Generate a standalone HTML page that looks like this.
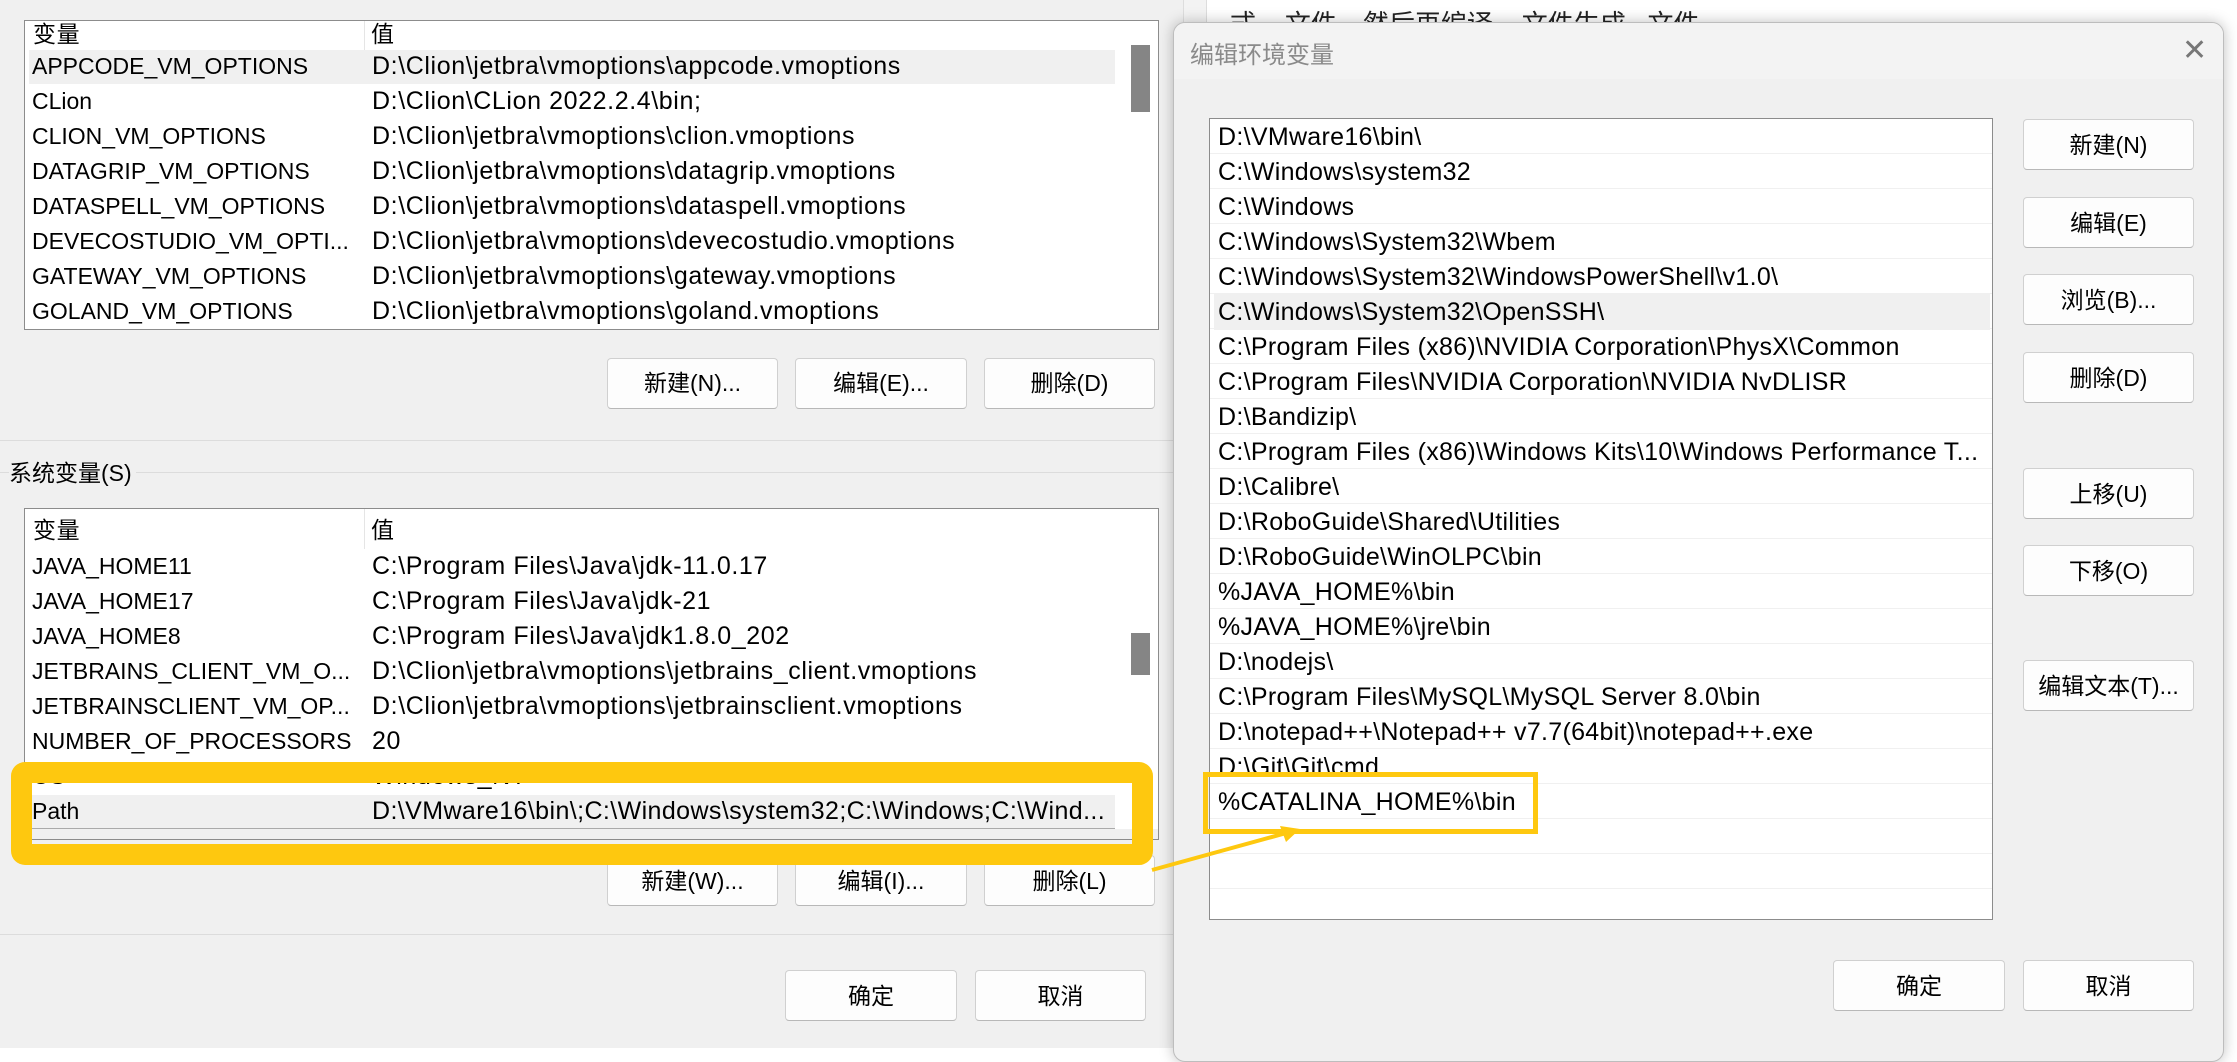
<!DOCTYPE html>
<html><head><meta charset="utf-8">
<style>
*{margin:0;padding:0;box-sizing:border-box}
body{width:2237px;height:1048px;position:relative;overflow:hidden;background:#fff;font-family:"Liberation Sans","Noto Sans CJK SC",sans-serif;font-size:23px;color:#000}
.a{position:absolute}
.box{position:absolute;background:#fff;border:1px solid #8c8c8c;overflow:hidden}
.row{position:absolute;left:0;height:35px;line-height:35px;white-space:nowrap;font-size:25px;letter-spacing:0.6px}
.nm .row{font-size:23px;letter-spacing:0}
.dl div{font-size:25px;letter-spacing:0.3px;white-space:nowrap}
.btn{position:absolute;background:#fdfdfd;border:1px solid #d0d0d0;border-bottom-color:#b8b8b8;border-radius:4px;text-align:center;font-size:23px}
</style></head><body>
<!-- left panel -->
<div class="a" style="left:0;top:0;width:1183px;height:1048px;background:#f0f0f0"></div>
<div class="a" style="left:1183px;top:0;width:24px;height:1048px;background:#f3f3f3;border-left:1px solid #ddd;border-right:1px solid #ddd"></div>
<div class="a" style="left:1230px;top:4px;font-size:26px;color:#222;white-space:nowrap">式. &nbsp;&nbsp;文件，然后再编译. &nbsp;&nbsp;文件生成. &nbsp;文件</div>

<!-- list 1 -->
<div class="box" style="left:24px;top:20px;width:1135px;height:310px">
  <div class="a" style="left:0;top:0;width:1100px;height:29px;background:#fff"></div>
  <div class="a" style="left:339px;top:0;width:1px;height:29px;background:#e5e5e5"></div>
  <div class="row" style="top:-4px;left:8px;font-size:23px">变量</div>
  <div class="row" style="top:-4px;left:346px;font-size:23px">值</div>
  <div class="a" style="left:4px;top:29px;width:1086px;height:34px;background:#f0f0f0"></div>
  <div class="a" style="left:1100px;top:0;width:34px;height:310px;background:#fff"></div>
  <div class="a" style="left:1106px;top:24px;width:19px;height:67px;background:#858585"></div>
</div>
<div class="a nm" style="left:32px;top:49px">
  <div class="row" style="top:0">APPCODE_VM_OPTIONS</div>
  <div class="row" style="top:35px">CLion</div>
  <div class="row" style="top:70px">CLION_VM_OPTIONS</div>
  <div class="row" style="top:105px">DATAGRIP_VM_OPTIONS</div>
  <div class="row" style="top:140px">DATASPELL_VM_OPTIONS</div>
  <div class="row" style="top:175px">DEVECOSTUDIO_VM_OPTI...</div>
  <div class="row" style="top:210px">GATEWAY_VM_OPTIONS</div>
  <div class="row" style="top:245px">GOLAND_VM_OPTIONS</div>
</div>
<div class="a" style="left:372px;top:49px">
  <div class="row" style="top:0">D:\Clion\jetbra\vmoptions\appcode.vmoptions</div>
  <div class="row" style="top:35px">D:\Clion\CLion 2022.2.4\bin;</div>
  <div class="row" style="top:70px">D:\Clion\jetbra\vmoptions\clion.vmoptions</div>
  <div class="row" style="top:105px">D:\Clion\jetbra\vmoptions\datagrip.vmoptions</div>
  <div class="row" style="top:140px">D:\Clion\jetbra\vmoptions\dataspell.vmoptions</div>
  <div class="row" style="top:175px">D:\Clion\jetbra\vmoptions\devecostudio.vmoptions</div>
  <div class="row" style="top:210px">D:\Clion\jetbra\vmoptions\gateway.vmoptions</div>
  <div class="row" style="top:245px">D:\Clion\jetbra\vmoptions\goland.vmoptions</div>
</div>
<div class="btn" style="left:607px;top:358px;width:171px;height:51px;line-height:49px">新建(N)...</div>
<div class="btn" style="left:795px;top:358px;width:172px;height:51px;line-height:49px">编辑(E)...</div>
<div class="btn" style="left:984px;top:358px;width:171px;height:51px;line-height:49px">删除(D)</div>
<div class="a" style="left:0;top:440px;width:1183px;height:1px;background:#dcdcdc"></div>
<div class="a" style="left:0;top:472px;width:1183px;height:1px;background:#dcdcdc"></div>
<div class="a" style="left:9px;top:458px;background:#f0f0f0;padding-right:4px;line-height:30px">系统变量(S)</div>

<!-- list 2 -->
<div class="box" style="left:24px;top:508px;width:1135px;height:332px">
  <div class="a" style="left:339px;top:0;width:1px;height:40px;background:#e5e5e5"></div>
  <div class="row" style="top:4px;left:8px;font-size:23px">变量</div>
  <div class="row" style="top:4px;left:346px;font-size:23px">值</div>
  <div class="a" style="left:1100px;top:0;width:34px;height:332px;background:#fff"></div>
  <div class="a" style="left:1106px;top:124px;width:19px;height:42px;background:#858585"></div>
  <div class="a" style="left:4px;top:286px;width:1086px;height:34px;background:#f0f0f0;border-bottom:1px solid #aaa"></div>
  <div class="a" style="left:0;top:320px;width:1135px;height:12px;background:#f0f0f0"></div>
</div>
<div class="a nm" style="left:32px;top:549px">
  <div class="row" style="top:0">JAVA_HOME11</div>
  <div class="row" style="top:35px">JAVA_HOME17</div>
  <div class="row" style="top:70px">JAVA_HOME8</div>
  <div class="row" style="top:105px">JETBRAINS_CLIENT_VM_O...</div>
  <div class="row" style="top:140px">JETBRAINSCLIENT_VM_OP...</div>
  <div class="row" style="top:175px">NUMBER_OF_PROCESSORS</div>
  <div class="row" style="top:210px">OS</div>
  <div class="row" style="top:245px">Path</div>
</div>
<div class="a" style="left:372px;top:549px">
  <div class="row" style="top:0">C:\Program Files\Java\jdk-11.0.17</div>
  <div class="row" style="top:35px">C:\Program Files\Java\jdk-21</div>
  <div class="row" style="top:70px">C:\Program Files\Java\jdk1.8.0_202</div>
  <div class="row" style="top:105px">D:\Clion\jetbra\vmoptions\jetbrains_client.vmoptions</div>
  <div class="row" style="top:140px">D:\Clion\jetbra\vmoptions\jetbrainsclient.vmoptions</div>
  <div class="row" style="top:175px">20</div>
  <div class="row" style="top:210px">Windows_NT</div>
  <div class="row" style="top:245px;letter-spacing:0.4px">D:\VMware16\bin\;C:\Windows\system32;C:\Windows;C:\Wind...</div>
</div>
<div class="btn" style="left:607px;top:855px;width:171px;height:51px;line-height:51px">新建(W)...</div>
<div class="btn" style="left:795px;top:855px;width:172px;height:51px;line-height:51px">编辑(I)...</div>
<div class="btn" style="left:984px;top:855px;width:171px;height:51px;line-height:51px">删除(L)</div>
<div class="a" style="left:11px;top:762px;width:1142px;height:103px;border:21px solid #fec80f;border-radius:14px"></div>
<div class="a" style="left:0;top:934px;width:1183px;height:1px;background:#dcdcdc"></div>
<div class="btn" style="left:785px;top:970px;width:172px;height:51px;line-height:50px">确定</div>
<div class="btn" style="left:975px;top:970px;width:171px;height:51px;line-height:50px">取消</div>

<!-- dialog -->
<div class="a" style="left:1173px;top:22px;width:1051px;height:1040px;background:#f0f0f0;border:1px solid #bdbdbd;border-radius:12px;box-shadow:0 0 14px rgba(0,0,0,.25);overflow:hidden">
  <div class="a" style="left:0;top:0;width:1051px;height:56px;background:#f3f3f3"></div>
  <div class="a" style="left:16px;top:12px;font-size:24px;color:#8a8a8a">编辑环境变量</div>
  <div class="a" style="left:1008px;top:10px;font-size:30px;color:#777;font-weight:300">✕</div>
</div>
<div class="box" style="left:1209px;top:118px;width:784px;height:802px">
  <div class="a" style="left:4px;top:175px;width:776px;height:36px;background:#f0f0f0"></div>
  <div class="a dl" style="left:0;top:0;width:782px">
    <div style="height:35px;border-bottom:1px solid #f0f0f0;line-height:36px;padding-left:8px">D:\VMware16\bin\</div>
    <div style="height:35px;border-bottom:1px solid #f0f0f0;line-height:36px;padding-left:8px">C:\Windows\system32</div>
    <div style="height:35px;border-bottom:1px solid #f0f0f0;line-height:36px;padding-left:8px">C:\Windows</div>
    <div style="height:35px;border-bottom:1px solid #f0f0f0;line-height:36px;padding-left:8px">C:\Windows\System32\Wbem</div>
    <div style="height:35px;border-bottom:1px solid #f0f0f0;line-height:36px;padding-left:8px">C:\Windows\System32\WindowsPowerShell\v1.0\</div>
    <div style="height:35px;border-bottom:1px solid #f0f0f0;line-height:36px;padding-left:8px">C:\Windows\System32\OpenSSH\</div>
    <div style="height:35px;border-bottom:1px solid #f0f0f0;line-height:36px;padding-left:8px">C:\Program Files (x86)\NVIDIA Corporation\PhysX\Common</div>
    <div style="height:35px;border-bottom:1px solid #f0f0f0;line-height:36px;padding-left:8px">C:\Program Files\NVIDIA Corporation\NVIDIA NvDLISR</div>
    <div style="height:35px;border-bottom:1px solid #f0f0f0;line-height:36px;padding-left:8px">D:\Bandizip\</div>
    <div style="height:35px;border-bottom:1px solid #f0f0f0;line-height:36px;padding-left:8px">C:\Program Files (x86)\Windows Kits\10\Windows Performance T...</div>
    <div style="height:35px;border-bottom:1px solid #f0f0f0;line-height:36px;padding-left:8px">D:\Calibre\</div>
    <div style="height:35px;border-bottom:1px solid #f0f0f0;line-height:36px;padding-left:8px">D:\RoboGuide\Shared\Utilities</div>
    <div style="height:35px;border-bottom:1px solid #f0f0f0;line-height:36px;padding-left:8px">D:\RoboGuide\WinOLPC\bin</div>
    <div style="height:35px;border-bottom:1px solid #f0f0f0;line-height:36px;padding-left:8px">%JAVA_HOME%\bin</div>
    <div style="height:35px;border-bottom:1px solid #f0f0f0;line-height:36px;padding-left:8px">%JAVA_HOME%\jre\bin</div>
    <div style="height:35px;border-bottom:1px solid #f0f0f0;line-height:36px;padding-left:8px">D:\nodejs\</div>
    <div style="height:35px;border-bottom:1px solid #f0f0f0;line-height:36px;padding-left:8px">C:\Program Files\MySQL\MySQL Server 8.0\bin</div>
    <div style="height:35px;border-bottom:1px solid #f0f0f0;line-height:36px;padding-left:8px">D:\notepad++\Notepad++ v7.7(64bit)\notepad++.exe</div>
    <div style="height:35px;border-bottom:1px solid #f0f0f0;line-height:36px;padding-left:8px">D:\Git\Git\cmd</div>
    <div style="height:35px;border-bottom:1px solid #f0f0f0;line-height:36px;padding-left:8px">%CATALINA_HOME%\bin</div>
    <div style="height:35px;border-bottom:1px solid #f0f0f0"></div>
    <div style="height:35px;border-bottom:1px solid #f0f0f0"></div>
    <div style="height:35px;border-bottom:1px solid #f0f0f0"></div>
  </div>
</div>
<div class="a" style="left:1203px;top:772px;width:335px;height:62px;border:5px solid #fec80f"></div>
<svg class="a" style="left:1140px;top:820px" width="170" height="60"><line x1="12" y1="50" x2="150" y2="12" stroke="#fec80f" stroke-width="4"/><polygon points="160,9 140,6 146,22" fill="#fec80f"/></svg>
<div class="btn" style="left:2023px;top:119px;width:171px;height:51px;line-height:51px">新建(N)</div>
<div class="btn" style="left:2023px;top:197px;width:171px;height:51px;line-height:51px">编辑(E)</div>
<div class="btn" style="left:2023px;top:274px;width:171px;height:51px;line-height:51px">浏览(B)...</div>
<div class="btn" style="left:2023px;top:352px;width:171px;height:51px;line-height:51px">删除(D)</div>
<div class="btn" style="left:2023px;top:468px;width:171px;height:51px;line-height:51px">上移(U)</div>
<div class="btn" style="left:2023px;top:545px;width:171px;height:51px;line-height:51px">下移(O)</div>
<div class="btn" style="left:2023px;top:660px;width:171px;height:51px;line-height:51px">编辑文本(T)...</div>
<div class="btn" style="left:1833px;top:960px;width:172px;height:51px;line-height:51px">确定</div>
<div class="btn" style="left:2023px;top:960px;width:171px;height:51px;line-height:51px">取消</div>
</body></html>
